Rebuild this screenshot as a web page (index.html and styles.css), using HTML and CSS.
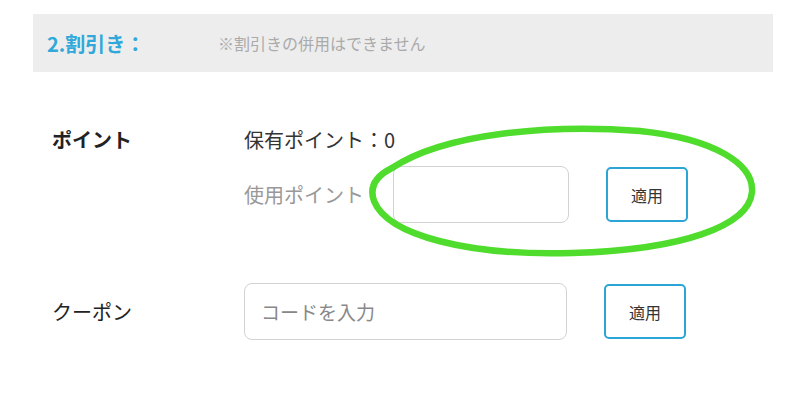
FILE: index.html
```html
<!DOCTYPE html>
<html lang="ja">
<head>
    <meta charset="UTF-8">
    <meta name="viewport" content="width=device-width, initial-scale=1.0">
    <title>割引き</title>
    <link rel="stylesheet" href="styles.css">
</head>
<body>
    <div class="page">
        <!-- Section header -->
        <div class="section-head">
            <div class="section-title">2.割引き：</div>
            <div class="section-note">※割引きの併用はできません</div>
        </div>

        <!-- Points -->
        <div class="row row-point">
            <div class="row-label bold">ポイント</div>
            <div class="row-field">
                <div class="owned">保有ポイント：0</div>
                <div class="use-line">
                    <span class="use-label">使用ポイント：</span>
                    <input class="text-input point-input" type="text">
                    <button class="apply">適用</button>
                </div>
            </div>
        </div>

        <!-- Coupon -->
        <div class="row row-coupon">
            <div class="row-label">クーポン</div>
            <div class="use-line">
                <input class="text-input coupon-input" type="text" placeholder="コードを入力">
                <button class="apply">適用</button>
            </div>
        </div>

        <!-- Hand-drawn highlight -->
        <svg class="marker" width="800" height="407" viewBox="0 0 800 407">
            <path d="M392 168 C445 133 550 124 640 131 C715 139 754 164 752 192 C749 226 682 250 572 253 C470 256 388 236 374 201 C369 187 376 176 392 168 Z"
                  fill="none" stroke="#4fdc2c" stroke-width="6.5" stroke-linejoin="round"/>
        </svg>
    </div>
</body>
</html>
```

FILE: styles.css
```css
/* General */
body {
    margin: 0;
    font-family: "Noto Sans CJK JP", "Noto Sans", sans-serif;
    color: #333;
    background: #fff;
}
.page {
    position: relative;
    width: 800px;
    height: 407px;
    padding: 14px 27px 0 33px;
    box-sizing: border-box;
    overflow: hidden;
}

/* Header band */
.section-head {
    display: flex;
    align-items: center;
    height: 58px;
    padding-left: 14px;
    background: #ededed;
}
.section-title {
    width: 171px;
    font-size: 20px;
    font-weight: bold;
    color: #30a8d9;
}
.section-note {
    font-size: 16px;
    color: #aaa;
}

/* Rows */
.row {
    display: grid;
    grid-template-columns: 192px 1fr;
    padding-left: 19px;
}
.row-label {
    font-size: 20px;
    line-height: 28px;
    color: #222;
}
.bold {
    font-weight: bold;
}
.row-point {
    margin-top: 54px;
}
.owned {
    font-size: 20px;
    line-height: 28px;
    color: #333;
}
.use-line {
    display: flex;
    align-items: center;
}
.row-point .use-line {
    margin-top: 12px;
}
.use-label {
    width: 149px;
    font-size: 20px;
    color: #999;
    white-space: nowrap;
}
.row-coupon {
    margin-top: 60px;
    align-items: center;
}

/* Inputs and buttons */
.text-input {
    box-sizing: border-box;
    height: 57px;
    border: 1px solid #d2d2d2;
    border-radius: 8px;
    padding: 0 16px;
    font-family: inherit;
    font-size: 19px;
    color: #333;
    outline: none;
}
.text-input::placeholder {
    color: #888;
}
.point-input {
    width: 176px;
}
.coupon-input {
    width: 323px;
}
.apply {
    box-sizing: border-box;
    width: 82px;
    height: 55px;
    margin-left: 37px;
    border: 2px solid #2aa5d6;
    border-radius: 5px;
    background: #fff;
    font-family: inherit;
    font-size: 16px;
    color: #333;
    cursor: pointer;
}

/* Annotation overlay */
.marker {
    position: absolute;
    left: 0;
    top: 0;
    pointer-events: none;
}
```
